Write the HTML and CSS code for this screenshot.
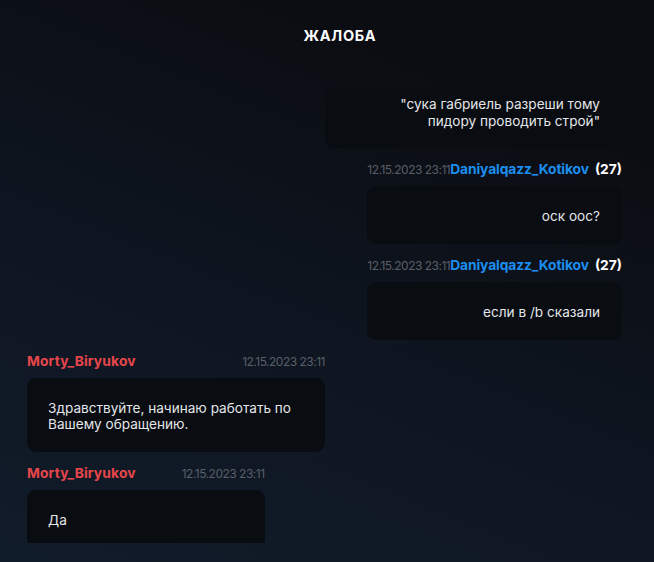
FILE: index.html
```html
<!DOCTYPE html>
<html lang="ru">
<head>
    <meta charset="UTF-8">
    <meta name="viewport" content="width=device-width, initial-scale=1.0">
    <title>Жалоба</title>
    <link rel="stylesheet" href="styles.css">
</head>
<body>
    <div class="page">
        <div class="header">ЖАЛОБА</div>

        <div class="chat">
            <div class="msg out quote">
                <div class="bubble">"сука габриель разреши тому<br>пидору проводить строй"</div>
            </div>

            <div class="msg out">
                <div class="meta">
                    <span class="date">12.15.2023 23:11</span>
                    <span class="name blue">Daniyalqazz_Kotikov</span>
                    <span class="level">(27)</span>
                </div>
                <div class="bubble">оск оос?</div>
            </div>

            <div class="msg out">
                <div class="meta">
                    <span class="date">12.15.2023 23:11</span>
                    <span class="name blue">Daniyalqazz_Kotikov</span>
                    <span class="level">(27)</span>
                </div>
                <div class="bubble">если в /b сказали</div>
            </div>

            <div class="msg in">
                <div class="meta">
                    <span class="name red">Morty_Biryukov</span>
                    <span class="date">12.15.2023 23:11</span>
                </div>
                <div class="bubble">Здравствуйте, начинаю работать по Вашему обращению.</div>
            </div>

            <div class="msg in">
                <div class="meta">
                    <span class="name red">Morty_Biryukov</span>
                    <span class="date">12.15.2023 23:11</span>
                </div>
                <div class="bubble">Да</div>
            </div>
        </div>
    </div>
</body>
</html>
```

FILE: styles.css
```css
* {
    box-sizing: border-box;
}

html, body {
    margin: 0;
    height: 100%;
}

body {
    font-family: Inter, "Noto Sans", sans-serif;
    background: linear-gradient(22deg, #111c2a 0%, #0e1520 45%, #0b0d12 80%);
    color: #e4e6e9;
    overflow: hidden;
}

.page {
    height: 562px;
    display: flex;
    flex-direction: column;
}

.header {
    height: 75px;
    padding: 27px 0 0 26px;
    text-align: center;
    font-weight: 700;
    font-size: 14.5px;
    color: #fff;
    letter-spacing: 0.7px;
}

.chat {
    height: 468px;
    overflow: hidden;
    padding: 12px 32px 0 27px;
    display: flex;
    flex-direction: column;
    gap: 12px;
}

.msg {
    display: flex;
    flex-direction: column;
}

.msg.out {
    align-self: flex-end;
}

.msg.in {
    align-self: flex-start;
    max-width: 298px;
}

.meta {
    display: flex;
    align-items: center;
    height: 18px;
    margin-bottom: 8px;
    white-space: nowrap;
}

.msg.in .meta {
    justify-content: space-between;
    gap: 46px;
}

.msg.out .meta {
    justify-content: flex-end;
}

.date {
    font-size: 12px;
    color: #5a5f67;
    letter-spacing: -0.5px;
}

.name {
    font-weight: 700;
    font-size: 13.8px;
}

.msg.out .name {
    letter-spacing: -0.1px;
}

.msg.in .name {
    letter-spacing: 0.15px;
}

.blue {
    color: #1b8ef0;
}

.red {
    color: #e8464b;
}

.level {
    margin-left: 6px;
    font-weight: 700;
    font-size: 13.8px;
    color: #fff;
}

.bubble {
    background: #090c11;
    border-radius: 9px;
    padding: 22px 22px 20px 21px;
    font-size: 13.6px;
    line-height: 16px;
    color: #e4e6e9;
}

.msg.out .bubble {
    text-align: right;
}

.msg.quote .bubble {
    width: 297px;
    padding: 9px 22px 18px;
    line-height: 17px;
}
```
